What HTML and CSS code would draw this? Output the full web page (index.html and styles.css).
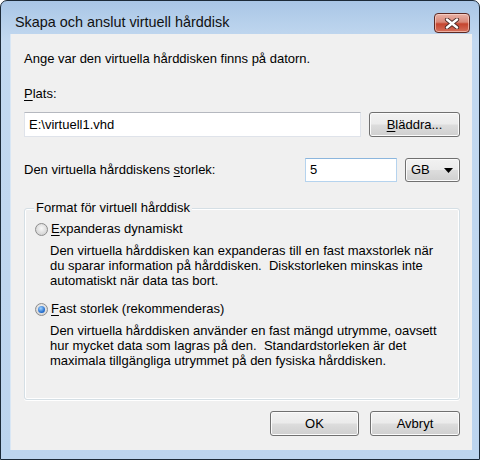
FILE: index.html
```html
<!DOCTYPE html>
<html lang="sv">
<head>
    <meta charset="UTF-8">
    <title>Skapa och anslut virtuell hårddisk</title>
    <link rel="stylesheet" href="styles.css">
</head>
<body>
    <div class="window">
        <div class="titlebar">
            <span class="title">Skapa och anslut virtuell hårddisk</span>
            <div class="close">
                <svg width="16" height="11" viewBox="0 0 16 11">
                    <path d="M3 1.5 L13 9.5 M13 1.5 L3 9.5" stroke="#4a2a26" stroke-width="4.2" stroke-linecap="round"/>
                    <path d="M3 1.5 L13 9.5 M13 1.5 L3 9.5" stroke="#fff" stroke-width="2.4" stroke-linecap="round"/>
                </svg>
            </div>
        </div>
        <div class="client">
            <div class="intro">Ange var den virtuella hårddisken finns på datorn.</div>
            <div class="label"><u>P</u>lats:</div>
            <div class="row path-row">
                <div class="textbox path">E:\virtuell1.vhd</div>
                <div class="button browse"><u>B</u>läddra...</div>
            </div>
            <div class="row size-row">
                <span class="size-label">Den virtuella hårddiskens <u>s</u>torlek:</span>
                <div class="textbox size">5</div>
                <div class="button combo">
                    <span>GB</span>
                    <svg width="9" height="5" viewBox="0 0 9 5"><path d="M0 0 H9 L4.5 5 Z" fill="#000"/></svg>
                </div>
            </div>
            <fieldset class="group">
                <legend>Format för virtuell hårddisk</legend>
                <div class="option">
                    <span class="radio"></span>
                    <span><u>E</u>xpanderas dynamiskt</span>
                </div>
                <div class="desc">Den virtuella hårddisken kan expanderas till en fast maxstorlek när<br>du sparar information på hårddisken.&nbsp; Diskstorleken minskas inte<br>automatiskt när data tas bort.</div>
                <div class="option second">
                    <span class="radio checked"></span>
                    <span><u>F</u>ast storlek (rekommenderas)</span>
                </div>
                <div class="desc">Den virtuella hårddisken använder en fast mängd utrymme, oavsett<br>hur mycket data som lagras på den.&nbsp; Standardstorleken är det<br>maximala tillgängliga utrymmet på den fysiska hårddisken.</div>
            </fieldset>
            <div class="actions">
                <div class="button ok">OK</div>
                <div class="button cancel">Avbryt</div>
            </div>
        </div>
    </div>
</body>
</html>
```

FILE: styles.css
```css
body {
    margin: 0;
    width: 480px;
    height: 460px;
    overflow: hidden;
    font-family: "Liberation Sans", Arial, sans-serif;
    font-size: 13px;
    color: #000;
}
u {
    text-decoration: underline;
    text-underline-offset: 2px;
}
.window {
    box-sizing: border-box;
    width: 480px;
    height: 460px;
    border: 1px solid #1c2a38;
    border-radius: 7px 7px 0 0;
    background: linear-gradient(#a9c6e6, #c3d9f0 40px, #bcd4ee);
    display: flex;
    flex-direction: column;
}
.titlebar {
    height: 33px;
    display: flex;
    align-items: flex-start;
    justify-content: space-between;
    padding: 0 9px 0 14px;
    box-sizing: border-box;
}
.title {
    font-size: 14.4px;
    line-height: 16px;
    margin-top: 13px;
    color: #111;
}
.close {
    width: 36px;
    height: 20px;
    box-sizing: border-box;
    margin-top: 12px;
    border: 1px solid #5c2a24;
    border-radius: 4px;
    background: linear-gradient(#e8b2a7, #d98878 45%, #c5452f 55%, #d5705c);
    box-shadow: inset 0 0 0 1px rgba(255, 220, 210, 0.6);
    display: flex;
    align-items: center;
    justify-content: center;
}
.client {
    margin: 0 7px 0 10px;
    height: 416px;
    background: #f0f0f0;
    box-shadow: -1px 0 0 #d9e7f5;
    padding: 17px 12px 0 13px;
    box-sizing: border-box;
    line-height: 16px;
}
.intro {
    height: 16px;
}
.label {
    margin-top: 19px;
}
.row {
    display: flex;
    align-items: center;
}
.path-row {
    margin-top: 10px;
    gap: 8px;
}
.textbox {
    box-sizing: border-box;
    background: #fff;
    border: 1px solid #dfe3ea;
    border-top-color: #b5b8bf;
    padding: 0 4px;
    display: flex;
    align-items: center;
}
.path {
    width: 337px;
    height: 25px;
}
.button {
    box-sizing: border-box;
    border: 1px solid #707070;
    border-radius: 3px;
    background: linear-gradient(#f2f2f2, #ebebeb 49%, #dddddd 51%, #cfcfcf);
    box-shadow: inset 0 0 0 1px #fbfbfb;
    display: flex;
    align-items: center;
    justify-content: center;
}
.browse {
    width: 91px;
    height: 25px;
}
.size-row {
    margin-top: 21px;
}
.size-label {
    flex: 1;
}
.size {
    width: 92px;
    height: 24px;
    border-color: #b5d3ee;
    border-top-color: #8cb6dd;
}
.combo {
    width: 55px;
    height: 24px;
    margin-left: 8px;
    justify-content: space-between;
    padding: 0 6px 0 5px;
}
.group {
    margin: 18px 0 0;
    padding: 5px 10px 31px;
    border: 1px solid #d5dfe5;
    border-radius: 3px;
    box-shadow: inset 0 0 0 1px #fff, 0 1px 0 #fff;
}
.group legend {
    padding: 0 2px;
    margin-left: -1px;
    background: #f0f0f0;
    line-height: 16px;
}
.option {
    display: flex;
    align-items: center;
    gap: 3px;
    height: 16px;
}
.option.second {
    margin-top: 13px;
}
.radio {
    width: 13px;
    height: 13px;
    box-sizing: border-box;
    border-radius: 50%;
    border: 1px solid #8d8d8d;
    background: radial-gradient(circle at 50% 40%, #f8f8f8, #d2d2d2 80%);
    display: flex;
    align-items: center;
    justify-content: center;
}
.radio.checked::after {
    content: "";
    width: 7px;
    height: 7px;
    border-radius: 50%;
    background: radial-gradient(circle at 40% 35%, #9fd3ff, #1a64c8 70%, #114fa3);
}
.desc {
    margin: 6px 0 0 15px;
    line-height: 15px;
}
.actions {
    margin-top: 11px;
    display: flex;
    justify-content: flex-end;
    gap: 11px;
}
.ok {
    width: 89px;
    height: 25px;
}
.cancel {
    width: 90px;
    height: 25px;
}
```
